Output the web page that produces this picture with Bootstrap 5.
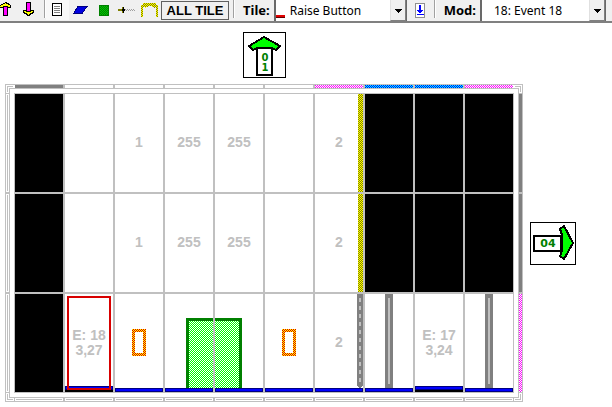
<!DOCTYPE html>
<html lang="en">
<head>
<meta charset="utf-8">
<meta name="viewport" content="width=device-width, initial-scale=1">
<title>Dungeon Map Editor</title>
<link rel="stylesheet" href="https://cdn.jsdelivr.net/npm/bootstrap@5.3.0/dist/css/bootstrap.min.css">
<style>
body{background:#fff;color:#000;font-family:"Liberation Sans",Arial,sans-serif;overflow:hidden}
svg{display:block;shape-rendering:crispEdges}
.toolbar{background:#f0f0f0;height:23px;border-bottom:2px solid #808080;overflow:hidden;white-space:nowrap}
.tool{width:23px;height:20px;padding:0;border:0;background:transparent;display:flex;align-items:center;justify-content:center;flex:none}
.tool-first{width:17px}
.tool-on{background:#f8f8f8}
.sep{width:2px;height:18px;border-left:1px solid #a0a0a0;border-right:1px solid #fff;flex:none}
.all-tile{width:68px;height:19px;margin-top:1px;padding:0;border:1px solid #606060;background:#f0f0f0;font-size:13px;line-height:17px;font-weight:700;flex:none}
.lbl{font:700 13px/20px "Noto Sans","Open Sans",sans-serif}
.combo{height:21px;background:#fff;border:2px solid #696969;border-width:0 1px 0 2px;flex:none}
.combo select{appearance:none;border:0;background:transparent;padding:0;flex:1;min-width:0;font:12px/20px "Noto Sans","Open Sans",sans-serif;color:#000}
.drop{width:16px;background:#f0f0f0;border-right:1px solid #808080;border-bottom:1px solid #808080;border-left:1px solid #e0e0e0;pointer-events:none}
.marker{width:9px;height:3px;background:#e00000;border-bottom:1px solid #600;margin:0 5px 3px 0}
.party{border:1px solid #000;background:#fff;padding:0}
.north{margin:9px 0 6px 243px}
.east{margin:138px 0 0 7px}
.dungeon{display:grid;grid-template-columns:9px 500px 9px;grid-template-rows:9px 300px 9px;margin-left:5px;flex:none}
.cells{display:grid;grid-template-columns:repeat(10,50px);grid-auto-rows:100px}
.tile{border:1px solid #c0c0c0;display:grid;color:#c0c0c0;font-weight:700;font-size:14px;line-height:15px}
.tile>*{grid-area:1/1}
.tile span{place-self:center;text-align:center;padding-bottom:1px}
.solid{background:#000}
</style>
<script src="https://cdn.jsdelivr.net/npm/bootstrap@5.3.0/dist/js/bootstrap.bundle.min.js"></script>
</head>
<body>
<svg width="0" height="0" class="position-absolute" aria-hidden="true"><defs>
<pattern id="pGreen" width="2" height="2" patternUnits="userSpaceOnUse"><path fill="#fff" d="M0 0h2v2h-2z"/><path fill="#0f0" d="M0 0h1v1h-1zM1 1h1v1h-1z"/></pattern>
<pattern id="pRed" width="2" height="2" patternUnits="userSpaceOnUse"><path fill="#e00000" d="M0 0h2v2h-2z"/><path fill="#ff0" d="M0 0h1v1h-1zM1 1h1v1h-1z"/></pattern>
<pattern id="pYellow" width="2" height="2" patternUnits="userSpaceOnUse"><path fill="#ff0" d="M0 0h2v2h-2z"/><path fill="#808000" d="M0 0h1v1h-1zM1 1h1v1h-1z"/></pattern>
<pattern id="pPink" width="2" height="2" patternUnits="userSpaceOnUse"><path fill="#fff" d="M0 0h2v2h-2z"/><path fill="#f0f" d="M0 0h1v1h-1zM1 1h1v1h-1z"/></pattern>
<pattern id="pBlue" width="2" height="2" patternUnits="userSpaceOnUse"><path fill="#0ff" d="M0 0h2v2h-2z"/><path fill="#00f" d="M0 0h1v1h-1zM1 1h1v1h-1z"/></pattern>
<pattern id="pIcon" width="2" height="2" patternUnits="userSpaceOnUse"><path fill="#008000" d="M0 0h2v2h-2z"/><path fill="#00c800" d="M0 0h1v1h-1zM1 1h1v1h-1z"/></pattern>
<g id="floor"><path fill="#000080" d="M0 94h48v4h-48z"/><path fill="#00f" d="M1 95h46v2h-46z"/></g>
<g id="step"><path fill="#000" d="M0 92h48v6h-48z"/><path fill="#000080" d="M0 92h48v4h-48z"/><path fill="#00f" d="M1 93h46v2h-46z"/></g>
<path id="button" fill="url(#pRed)" fill-rule="evenodd" d="M17 35h14v27h-14zM20 38v21h8v-21z"/>
<g id="pillar"><path fill="#808080" d="M20 0h8v94h-8z"/><path fill="#c0c0c0" d="M23 4h2v86h-2z"/></g>
<path id="wallY" fill="url(#pYellow)" d="M43 0h5v98h-5z"/>
</defs></svg>

<header class="toolbar d-flex align-items-start">
<button class="tool tool-first" aria-label="Stairs up"><svg width="17" height="20"><path fill="#000" d="M5 2h2v1h2v1h1v1h1v3h-3v8h-5v-8h-3v-3h1v-1h2v-1h2z"/><path fill="#ff0" d="M5 3h1v1h2v1h2v2h-2v-1h-5v1h-3v-1h1v-1h2v-1h2z"/><path fill="#f0f" d="M4 7h3v8h-3z"/></svg></button>
<button class="tool" aria-label="Stairs down"><svg width="15" height="20"><path fill="#000" d="M5 2h5v8h3v3h-1v1h-2v1h-1v1h-3v-1h-1v-1h-2v-1h-1v-3h3z"/><path fill="#f0f" d="M6 3h3v8h-3z"/><path fill="#ff0" d="M3 11h2v1h5v-1h2v1h-1v1h-2v1h-1v1h-1v-1h-1v-1h-2v-1h-1z"/></svg></button>
<span class="sep ms-1"></span>
<button class="tool tool-on" aria-label="Floor tile"><svg width="11" height="14"><path fill="#fff" stroke="#000" d="M.5.5h9v12h-9z"/><path stroke="#808080" d="M2 3.5h6M2 5.5h6M2 7.5h6M2 9.5h6"/></svg></button>
<button class="tool" aria-label="Pit"><svg width="15" height="9"><path fill="#0000e0" stroke="#000080" d="M5 .5h9l-5 7h-8.500z"/></svg></button>
<button class="tool" aria-label="Teleporter"><svg width="10" height="11"><path fill="url(#pIcon)" stroke="#008000" d="M.5.5h9v10h-9z"/></svg></button>
<button class="tool" aria-label="Trick wall"><svg width="17" height="8"><path fill="#808000" d="M0 3h4v2h-4z"/><path fill="#808000" d="M4 1h1v6h-1z"/><path fill="#000" d="M4 3h3v2h-3zM5 1h1v6h-1z"/><path stroke="#a0a0a0" stroke-dasharray="1 1" d="M7 3.500h10M8 4.500h9"/></svg></button>
<button class="tool" aria-label="Door"><svg width="17" height="16"><path fill="none" stroke="url(#pYellow)" stroke-width="2" d="M1 15v-11h2v-2h11v2h2v11"/><path fill="none" stroke="url(#pYellow)" stroke-width="2" d="M4 5l3-2h4l3 2"/></svg></button>
<button class="all-tile">ALL TILE</button>
<span class="sep ms-1"></span>
<label class="lbl ms-2 me-1" for="tile">Tile:</label>
<div class="combo d-flex" style="width:133px"><span class="marker align-self-end"></span><select id="tile"><option>Raise Button</option></select><span class="drop"><svg width="14" height="19"><path d="M4 9h7v1h-1v1h-1v1h-1v1h-1v-1h-1v-1h-1v-1h-1z"/></svg></span></div>
<button class="tool ms-1" style="width:19px" aria-label="Apply tile"><svg width="11" height="15"><path fill="#fff" stroke="#909090" d="M.5.5h9v14h-9z"/><path fill="#00f" d="M4 2h2v5h2v1h-1v1h-1v1h-2v-1h-1v-1h-1v-1h2zM2 11h7v1h-7z"/></svg></button>
<span class="sep ms-1"></span>
<label class="lbl ms-2 me-1" for="mod">Mod:</label>
<div class="combo d-flex" style="width:126px"><select id="mod" class="ps-2 ms-1"><option>18: Event 18</option></select><span class="drop"><svg width="14" height="19"><path d="M4 9h7v1h-1v1h-1v1h-1v1h-1v-1h-1v-1h-1v-1h-1z"/></svg></span></div>
</header>

<main>
<div class="party north" style="width:43px"><svg width="41" height="44"><path fill="#0f0" stroke="#000" stroke-width="2" d="M20 4l16 9-4 4-5-2h-13l-5 2-4-4z"/><path fill="#fff" stroke="#000" stroke-width="2" d="M13 15h15v27h-15z"/><g fill="#008000" font-family="DejaVu Sans" font-weight="700" font-size="10" text-anchor="middle"><text x="21" y="28">0</text><text x="21" y="38">1</text></g></svg></div>
<div class="d-flex align-items-start">
<div class="dungeon">
<svg width="9" height="9"><path fill="none" stroke="#c0c0c0" d="M9 .5h-8.500v8.500M9 4.500h-4.500v4.500M8 2.500h-5.500v5.500"/></svg>
<svg width="500" height="9"><path fill="#808080" d="M1 1h48v3h-48z"/><path fill="url(#pPink)" d="M301 1h48v3h-48zM451 1h48v3h-48z"/><path fill="url(#pBlue)" d="M351 1h98v3h-98z"/><path stroke="#c0c0c0" d="M0 .5h500M0 4.500h500"/><path stroke="#c0c0c0" stroke-width="2" d="M50 0v5M100 0v5M150 0v5M200 0v5M250 0v5M300 0v5M350 0v5M400 0v5M450 0v5"/></svg>
<svg width="9" height="9"><path fill="none" stroke="#c0c0c0" d="M0 .5h8.500v8.500M0 4.500h4.500v4.500M1 2.500h5.500v5.500"/></svg>
<svg width="9" height="300"><path fill="none" stroke="#c0c0c0" d="M.5 0v300M4.500 0v300M0 .5h5M0 299.500h5M2.500 2v96M2.500 102v96M2.500 202v96"/><path stroke="#c0c0c0" stroke-width="2" d="M0 100h5M0 200h5"/></svg>
<div class="cells" id="cells"></div>
<svg width="9" height="300"><path fill="#808080" d="M5 1h3v198h-3z"/><path fill="url(#pPink)" d="M5 201h3v98h-3z"/><path fill="none" stroke="#c0c0c0" d="M4.500 0v300M8.500 0v300M4 .5h5M4 299.500h5"/><path stroke="#c0c0c0" stroke-width="2" d="M4 100h5M4 200h5"/></svg>
<svg width="9" height="9"><path fill="none" stroke="#c0c0c0" d="M.5 0v8.500h8.500M4.500 0v4.500h4.500M2.500 1v5.500h5.500"/></svg>
<svg width="500" height="9"><path fill="none" stroke="#c0c0c0" d="M0 4.500h500M0 8.500h500M.5 4v5M499.500 4v5M2 6.500h46M52 6.500h46M102 6.500h46M152 6.500h46M202 6.500h46M252 6.500h46M302 6.500h46M352 6.500h46M402 6.500h46M452 6.500h46"/><path stroke="#c0c0c0" stroke-width="2" d="M50 4v5M100 4v5M150 4v5M200 4v5M250 4v5M300 4v5M350 4v5M400 4v5M450 4v5"/></svg>
<svg width="9" height="9"><path fill="none" stroke="#c0c0c0" d="M8.500 0v8.500h-8.500M4.500 0v4.500h-4.500M6.500 1v5.500h-5.500"/></svg>
</div>
<div class="party east" style="width:46px"><svg width="44" height="41"><path fill="#0f0" stroke="#000" stroke-width="2" d="M29 6l4-3 9 17-9 16-4-3 2-5v-16z"/><path fill="#fff" stroke="#000" stroke-width="2" d="M3 13h27v15h-27z"/><text x="17" y="24" fill="#008000" font-family="DejaVu Sans" font-weight="700" font-size="11" text-anchor="middle">04</text></svg></div>
</div>
</main>
<script>
const use = id => `<use href="#${id}"/>`;
const art = s => `<svg width="48" height="98">${s}</svg>`;
const upper = ['solid', '', '1', '255', '255', '', '2', 'solid', 'solid', 'solid'];
const door = {
  3: '<path fill="url(#pGreen)" d="M24 27h24v67h-24z"/><path fill="#008000" d="M21 24h27v3h-24v67h-3z"/>',
  4: '<path fill="url(#pGreen)" d="M0 27h24v67h-24z"/><path fill="#008000" d="M0 24h27v70h-3v-67h-24z"/>'
};
const dashed = '<path fill="#808080" d="M42 0h6v92h-1v1h-1v1h-2v-1h-1v-1h-1z"/><path stroke="#c0c0c0" stroke-width="2" stroke-dasharray="4 4" d="M45 4v86"/>';
const lower = [
  null,
  [use('step') + '<path fill="none" stroke="#d80000" stroke-width="2" d="M3 3h42v92h-42z"/>', 'E: 18<br>3,27'],
  [use('floor') + use('button'), ''],
  [use('floor') + door[3], ''],
  [use('floor') + door[4], ''],
  [use('floor') + use('button'), ''],
  [use('floor') + dashed, '2'],
  [use('floor') + use('pillar'), ''],
  [use('step'), 'E: 17<br>3,24'],
  [use('floor') + use('pillar'), '']
];
let html = '';
for (let r = 0; r < 2; r++)
  upper.forEach((t, c) => html += t === 'solid' ? '<div class="tile solid"></div>'
    : `<div class="tile">${c === 6 ? art(use('wallY')) : ''}<span>${t}</span></div>`);
lower.forEach(t => html += t ? `<div class="tile">${art(t[0])}<span>${t[1]}</span></div>` : '<div class="tile solid"></div>');
document.getElementById('cells').innerHTML = html;
</script>
</body>
</html>
